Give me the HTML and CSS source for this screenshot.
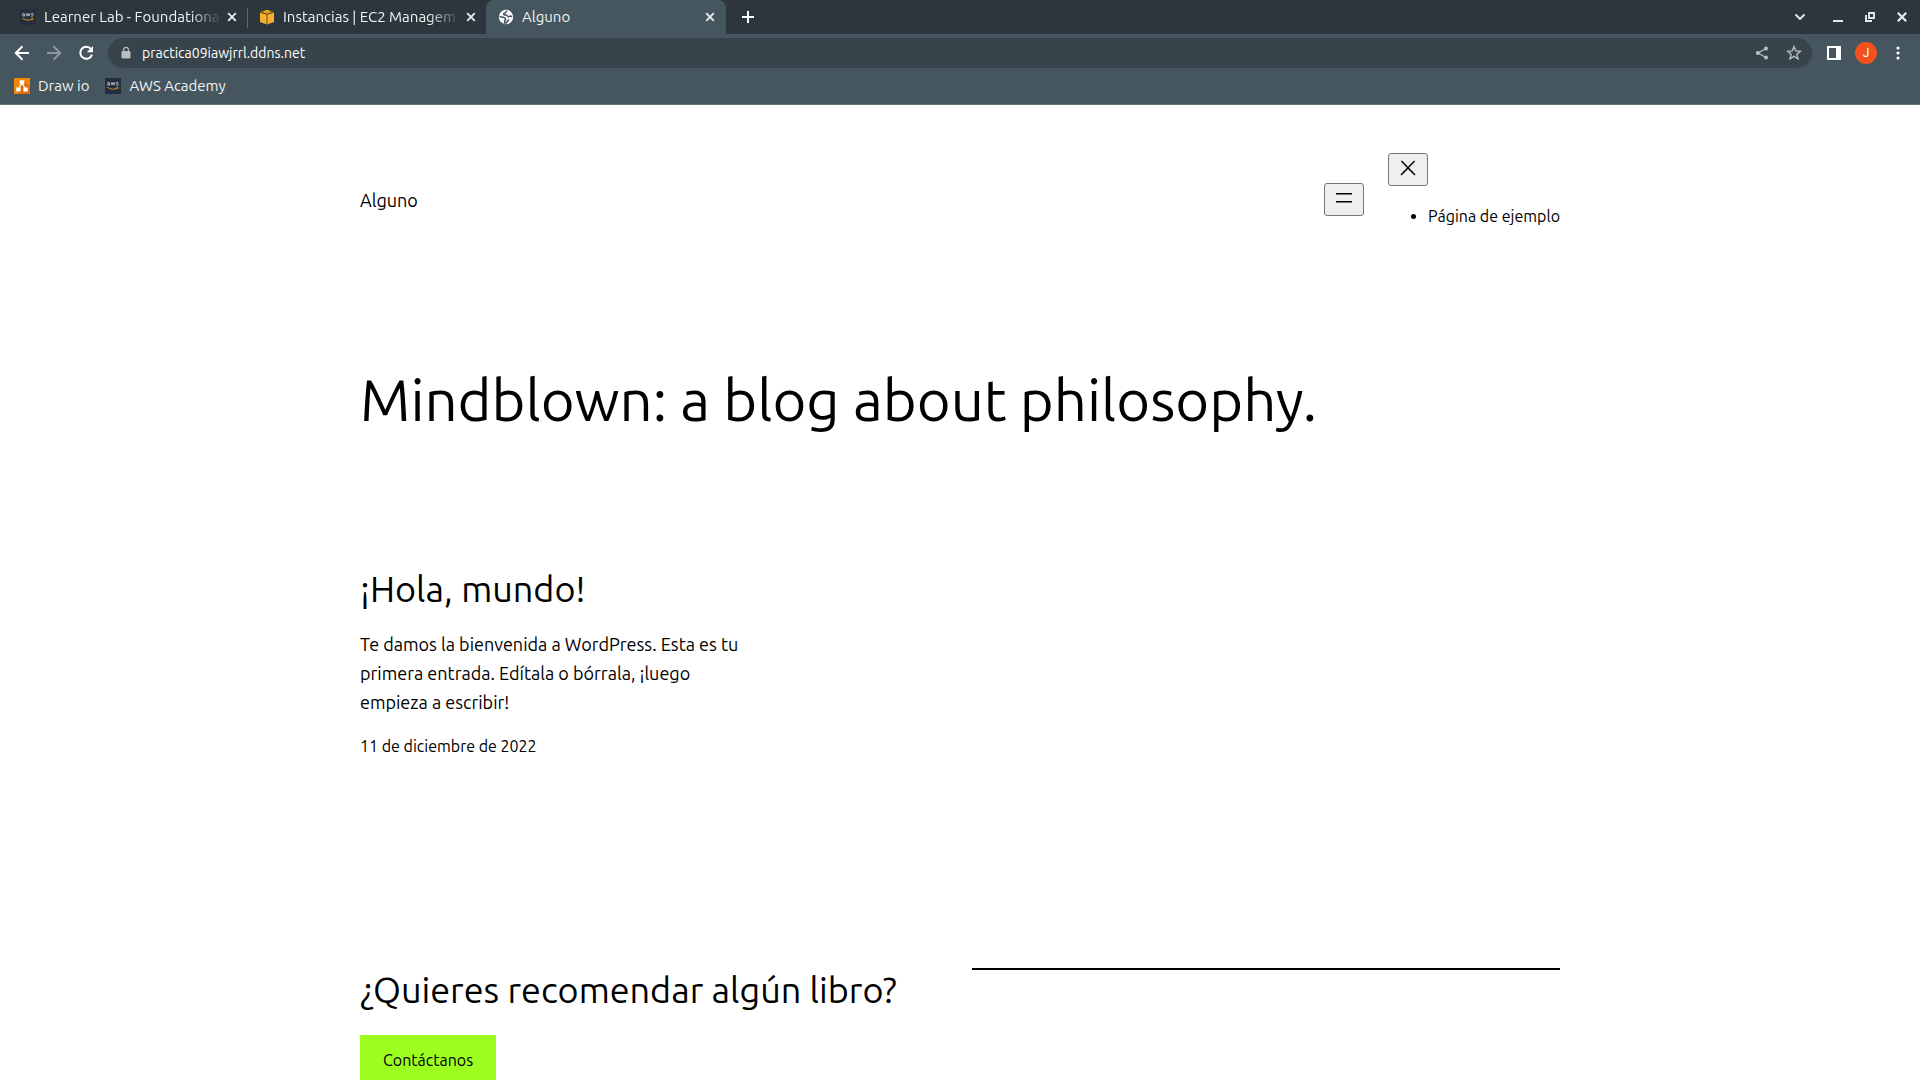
FILE: index.html
```html
<!DOCTYPE html>
<html lang="es">
<head>
<meta charset="utf-8">
<title>Alguno</title>
<link rel="stylesheet" href="styles.css">
</head>
<body>
<svg class="defs" width="0" height="0" aria-hidden="true">
  <symbol id="close" viewBox="0 0 10 10"><path d="M1.2 1.2 8.8 8.8M8.8 1.2 1.2 8.8" fill="none" stroke="currentColor" stroke-width="1.9"/></symbol>
  <symbol id="aws" viewBox="0 0 16 16"><path fill="#232f3e" d="M0 0h16v16H0z"/><path d="M2.3 4.6q2-.8 2.2.5V7.4M4.5 5.7Q2 5.6 2.2 6.7 2.9 7.6 4.5 6.6M6 4.2 7 7.1 8 4.4 9 7.1 10 4.2M13.4 4.6q-2-.7-2.2.4.1.5 1.1.7 1.3.3 1 1.1-.7.9-2.2.2" fill="none" stroke="#c4cad0" stroke-width=".8"/><path d="M2.3 9.2q5.300 3.500 10.400.7M11.200 9.100q2.600-.5 1.500 1.900" fill="none" stroke="#d98a20" stroke-width="1"/></symbol>
</svg>
<div class="browser">
  <header class="chrome">
    <div class="tabstrip">
      <div class="tab">
        <svg class="fav" width="16" height="16"><use href="#aws"/></svg>
        <span class="tab-title fade">Learner Lab - Foundationa</span>
        <button class="icon tab-close" aria-label="Cerrar"><svg width="10" height="10"><use href="#close"/></svg></button>
      </div>
      <div class="tab divided">
        <svg class="fav" width="16" height="16" viewBox="0 0 16 16"><path fill="#f4b22e" d="M1 3.200 8 5.300 15 3.200V13l-7 2.500L1 13z"/><path fill="#eaa51c" d="M1 3 8 .8 15 3 8 5z"/><path d="M1 3.300 8 5.300 15 3.300M8 5v10.500M4 1.800v2.500M12 1.800v2.500" fill="none" stroke="#60451a" stroke-width=".9"/></svg>
        <span class="tab-title fade">Instancias | EC2 Managem</span>
        <button class="icon tab-close" aria-label="Cerrar"><svg width="10" height="10"><use href="#close"/></svg></button>
      </div>
      <div class="tab active">
        <svg class="fav" width="16" height="16" viewBox="0 0 16 16"><circle cx="8" cy="8" r="7.200" fill="#fff"/><path d="M9 1.800C7.500 3 8 4 6.500 4.300 5 4.700 5.500 6 7 6h1.500c1 .2.500 1.700 1.800 1.700 1 0 1.300-.9 2.300-.7l1.600.8" fill="none" stroke="#45565f" stroke-width="1.500"/><path d="M1.500 7.400 6 8.500c1.500.3 1.700 1.200 1.700 2l-.8.700-.3 2.800c2 .4 2.500-.5 2.500-1.800 1.300 0 1.600-.8 1.500-2" fill="none" stroke="#45565f" stroke-width="1.500"/></svg>
        <span class="tab-title">Alguno</span>
        <button class="icon tab-close" aria-label="Cerrar"><svg width="10" height="10"><use href="#close"/></svg></button>
      </div>
      <button class="icon new-tab" aria-label="Nueva pestaña"><svg width="12" height="12" viewBox="0 0 12 12"><path d="M6 0v12M0 6h12" stroke="#fff" stroke-width="2"/></svg></button>
      <div class="window-controls">
        <button class="icon search-tabs" aria-label="Buscar pestañas"><svg width="12" height="12" viewBox="0 0 12 12"><path d="M1.500 3.500 6 8l4.500-4.500" fill="none" stroke="currentColor" stroke-width="1.900"/></svg></button>
        <button class="icon" aria-label="Minimizar"><svg width="12" height="12" viewBox="0 0 12 12"><path d="M1 9h10v2H1z" fill="currentColor"/></svg></button>
        <button class="icon" aria-label="Restaurar"><svg width="12" height="12" viewBox="0 0 12 12"><path d="M5 2h5v5H5zM2 4v6h6" fill="none" stroke="currentColor" stroke-width="1.900"/></svg></button>
        <button class="icon" aria-label="Cerrar ventana"><svg width="12" height="12" viewBox="0 0 12 12"><path d="M1.800 1.800 10.200 10.200M10.200 1.800 1.800 10.200" stroke="currentColor" stroke-width="2.200"/></svg></button>
      </div>
    </div>
    <div class="toolbar">
      <button class="icon" aria-label="Atrás"><svg width="16" height="16" viewBox="0 0 16 16"><path d="M15 8H2M8.500 1.300 1.800 8l6.700 6.700" fill="none" stroke="#fff" stroke-width="2"/></svg></button>
      <button class="icon" aria-label="Adelante"><svg width="16" height="16" viewBox="0 0 16 16"><path d="M1 8h13M7.500 1.300 14.200 8l-6.700 6.700" fill="none" stroke="#8d979d" stroke-width="2"/></svg></button>
      <button class="icon" aria-label="Recargar"><svg width="16" height="16" viewBox="0 0 16 16"><path d="M13 4a6 6 0 1 0 1 5.600" fill="none" stroke="#fff" stroke-width="2"/><path d="M15 1v6.200H8.800z" fill="#fff"/></svg></button>
      <div class="omnibox">
        <svg width="12" height="14" viewBox="0 0 12 14"><path d="M3 5h6q1.500 0 1.500 1.200v5.100q0 1.200-1.500 1.200H3q-1.500 0-1.500-1.200V6.200Q1.500 5 3 5z" fill="#b9bec1"/><path d="M3.600 6V3.700a2.400 2.400 0 0 1 4.800 0V6" fill="none" stroke="#b9bec1" stroke-width="1.200"/></svg>
        <input class="address" aria-label="Dirección" value="practica09iawjrrl.ddns.net">
        <button class="icon soft" aria-label="Compartir"><svg width="14" height="14" viewBox="0 0 14 14"><path d="M11 2.500 3 7l8 4.500" fill="none" stroke="currentColor" stroke-width="1.300"/><circle cx="11" cy="2.500" r="2" fill="currentColor"/><circle cx="2.800" cy="7" r="2" fill="currentColor"/><circle cx="11" cy="11.500" r="2" fill="currentColor"/></svg></button>
        <button class="icon soft" aria-label="Favorito"><svg width="16" height="16" viewBox="0 0 16 16"><path d="m8 1.700 1.800 4.200 4.600.4-3.500 3 1.100 4.500L8 11.400l-4 2.400 1.100-4.500-3.500-3 4.600-.4z" fill="none" stroke="currentColor" stroke-width="1.400"/></svg></button>
      </div>
      <button class="icon" aria-label="Panel lateral"><svg width="14" height="14" viewBox="0 0 14 14"><path d="M0 0h14v14H0zM2 2v10h7V2z" fill="#fff" fill-rule="evenodd"/></svg></button>
      <button class="avatar" aria-label="Perfil J">J</button>
      <button class="icon" aria-label="Menú"><svg width="4" height="14" viewBox="0 0 4 14"><g fill="#fff"><circle cx="2" cy="2" r="1.600"/><circle cx="2" cy="7" r="1.600"/><circle cx="2" cy="12" r="1.600"/></g></svg></button>
    </div>
    <nav class="bookmarks" aria-label="Marcadores">
      <a href="#"><svg width="16" height="16" viewBox="0 0 16 16"><path fill="#f08705" d="M0 0h16v16H0z"/><path fill="#df6c0c" d="m10 3 6 6v7H6l-3-3z"/><path d="M8 5 4.500 11M8 5l3.500 6" stroke="#fff" stroke-width="1.300"/><path d="M5.700 2.200h4.600v4H5.700zM2.200 9.500h4.400v4H2.200zM9.400 9.500h4.400v4H9.400z" fill="#fff"/></svg>Draw io</a>
      <a href="#"><svg width="16" height="16"><use href="#aws"/></svg>AWS Academy</a>
    </nav>
  </header>
  <div class="viewport">
    <div class="site">
      <header class="site-header">
        <a class="site-name" href="#">Alguno</a>
        <nav class="site-nav" aria-label="Navegación">
          <button class="nav-button" aria-label="Abrir menú"><svg width="24" height="24" viewBox="0 0 24 24"><path d="M4 7h16v1.500H4zM4 15h16v1.500H4z"/></svg></button>
          <div class="nav-panel">
            <button class="nav-button" aria-label="Cerrar menú"><svg width="24" height="24" viewBox="0 0 24 24"><path d="m13 11.800 6.100-6.300-1-1-6.100 6.200-6.100-6.200-1 1 6.100 6.300-6.500 6.700 1 1 6.500-6.600 6.500 6.600 1-1z"/></svg></button>
            <ul><li><a href="#">Página de ejemplo</a></li></ul>
          </div>
        </nav>
      </header>
      <main>
        <h1>Mindblown: a blog about philosophy.</h1>
        <div class="posts">
          <article>
            <h2><a href="#">¡Hola, mundo!</a></h2>
            <p class="excerpt">Te damos la bienvenida a WordPress. Esta es tu primera entrada. Edítala o bórrala, ¡luego empieza a escribir!</p>
            <time datetime="2022-12-11">11 de diciembre de 2022</time>
          </article>
        </div>
        <section class="contact">
          <div>
            <h2>¿Quieres recomendar algún libro?</h2>
            <a class="cta" href="#">Contáctanos</a>
          </div>
          <hr>
        </section>
      </main>
    </div>
  </div>
</div>
</body>
</html>
```
FILE: styles.css
```css
* { box-sizing: border-box; }

body {
  margin: 0;
  background: #fff;
  color: #000;
  font-family: Ubuntu, "Noto Sans", "Open Sans", sans-serif;
  font-variation-settings: "wght" 450;
}

a { color: inherit; text-decoration: none; }
button { font: inherit; }
svg { display: block; flex: none; }
.defs { position: absolute; }

.browser {
  display: flex;
  flex-direction: column;
  height: 100vh;
  overflow: hidden;
}

/* Browser frame */
.chrome {
  flex: none;
  background: #45565f;
  border-bottom: 1px solid #6a7880;
  color: #f1f3f4;
  font-size: 15px;
  line-height: 16px;
}

.icon {
  display: flex;
  flex: none;
  align-items: center;
  justify-content: center;
  width: 32px;
  height: 28px;
  padding: 0;
  border: 0;
  background: none;
  color: #e8eaed;
}
.icon.soft { color: #b9bec1; }

.tabstrip {
  display: flex;
  height: 34px;
  padding-left: 8px;
  background: #2c363c;
}
.tab {
  display: flex;
  align-items: center;
  width: 239px;
  padding: 0 5px 0 12px;
}
.fav { margin-right: 8px; }
.tab.active {
  width: 240px;
  padding-right: 6px;
  background: #45565f;
  border-radius: 8px 8px 0 0;
}
.divided { background: linear-gradient(#5f686d, #5f686d) 0 60% / 1px 20px no-repeat; }
.tab-title {
  flex: 1;
  min-width: 0;
  white-space: nowrap;
}
.fade { mask-image: linear-gradient(90deg, #000 82%, transparent); }
.tab-close { width: 20px; }
.new-tab { width: 44px; height: 34px; }
.window-controls { display: flex; margin-left: auto; padding-right: 2px; }
.window-controls .icon { height: 34px; }
.window-controls .search-tabs { margin-right: 6px; }

.toolbar {
  display: flex;
  align-items: center;
  height: 38px;
  padding: 0 6px;
}
.omnibox {
  display: flex;
  flex: 1;
  align-items: center;
  height: 30px;
  margin: 0 6px;
  padding: 0 2px 0 12px;
  border-radius: 15px;
  background: #38444b;
}
.address {
  flex: 1;
  min-width: 0;
  margin-left: 10px;
  padding: 0;
  border: 0;
  outline: 0;
  background: none;
  color: #fff;
  font: inherit;
  font-size: 14px;
}
.avatar {
  width: 22px;
  height: 22px;
  margin: 0 5px;
  padding: 0;
  border: 0;
  border-radius: 50%;
  background: #f4511e;
  color: #fff;
  font: 12px/22px Roboto, sans-serif;
}

.bookmarks {
  display: flex;
  gap: 16px;
  height: 32px;
  padding: 4px 14px 0;
}
.bookmarks a {
  display: flex;
  gap: 8px;
  height: 20px;
  align-items: center;
}

/* Web page */
.viewport { flex: 1; min-height: 0; overflow: hidden; }
.site { max-width: 1200px; margin: 0 auto; padding-top: 48px; }

.site-header {
  display: flex;
  align-items: center;
  justify-content: space-between;
}
.site-name { font-size: 18px; line-height: 24px; }
.site-nav { display: flex; align-items: center; gap: 24px; font-size: 16px; }
.nav-button {
  display: block;
  width: 40px;
  height: 33px;
  padding: 0 7px 3px;
  border: 1px solid #767676;
  border-radius: 3px;
  background: #efefef;
}
.nav-panel ul { margin: 16px 0; padding-left: 40px; line-height: 28px; }

h1, h2 { margin: 0; font-weight: inherit; }
h1 { margin-top: 118px; font-size: 58px; line-height: 72px; }
h2 { font-size: 36px; line-height: 44px; }

.posts {
  display: grid;
  grid-template-columns: repeat(3, minmax(0, 1fr));
  gap: 24px;
  margin-top: 131px;
}
.excerpt { margin: 19px 0 17px; font-size: 18px; line-height: 29px; }
time { font-size: 16px; line-height: 24px; display: block; }

.contact {
  display: grid;
  grid-template-columns: 1fr 1fr;
  gap: 24px;
  margin-top: 210px;
}
hr { width: 100%; margin: 0; border: 0; border-top: 2px solid #000; }
.cta {
  display: inline-block;
  margin-top: 23px;
  padding: 12px 23px;
  background: #9dff20;
  font-size: 16px;
  line-height: 26px;
}
```
